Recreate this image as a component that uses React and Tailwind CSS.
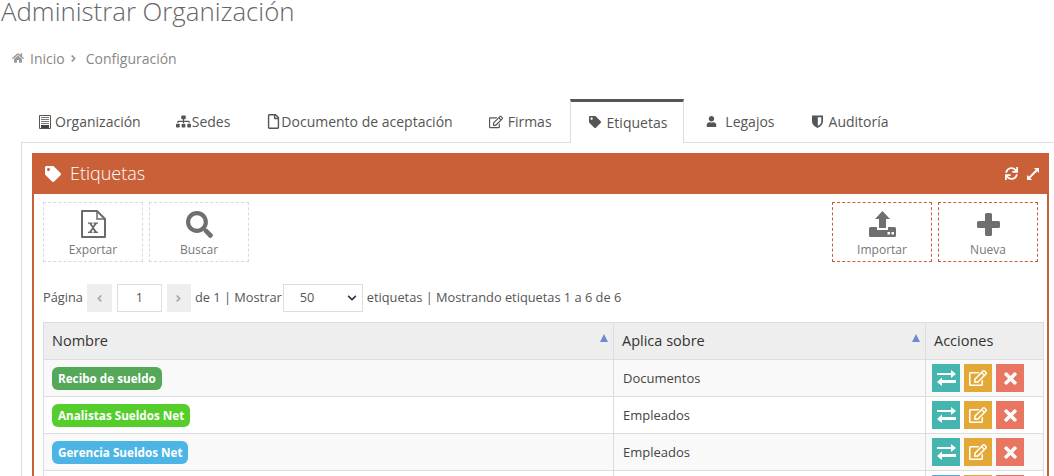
import React from "react";
import { FaHome, FaTag, FaSitemap, FaRegFile, FaRegEdit, FaUser, FaSync, FaSearch, FaAngleLeft, FaAngleRight, FaChevronDown } from "react-icons/fa";

const font = { fontFamily: '"Open Sans", sans-serif' };

function Building() {
  return (
    <svg width="12" height="14" viewBox="0 0 12 14" className="shrink-0">
      <path fill="none" stroke="#555" strokeWidth="1" d="M.5.5h11v13H.5z" />
      <path fill="#777" d="M2 2h8v1H2zM2 4h8v1H2zM2 6h8v1H2zM2 8h8v1H2z" />
      <path fill="#444" d="M2 10h8v3H2z" />
    </svg>
  );
}

function Shield() {
  return (
    <svg width="11" height="13" viewBox="0 0 11 13" className="shrink-0">
      <path fill="#555" d="M0 .5h11v6c0 3-2.500 5-5.500 6.500C2.500 11.500 0 9.500 0 6.500z" />
      <path fill="#fff" d="M5.800 2.200h3.500v4.300c0 1.800-1.500 3.200-3.500 4.400z" />
    </svg>
  );
}

function Upload() {
  return (
    <svg width="27" height="26" viewBox="0 0 27 26">
      <path fill="#6f6f6f" d="M13.500 0l7.500 8h-4v9h-7V8H6z" />
      <path fill="#6f6f6f" d="M1.500 16H8v3h11v-3h6.500a1.500 1.500 0 0 1 1.500 1.500v7a1.500 1.500 0 0 1-1.500 1.500h-24A1.500 1.500 0 0 1 0 24.500v-7A1.500 1.500 0 0 1 1.500 16z" />
      <path fill="#fff" d="M18.500 21h2.500v2.500h-2.500zM22.500 21h2.500v2.500h-2.500z" />
    </svg>
  );
}

function Plus() {
  return (
    <svg width="23" height="23" viewBox="0 0 23 23">
      <path fill="#6f6f6f" d="M9.500 0h4A1.500 1.500 0 0 1 15 1.500V8h6.500A1.500 1.500 0 0 1 23 9.500v4a1.500 1.500 0 0 1-1.500 1.500H15v6.500a1.500 1.500 0 0 1-1.500 1.500h-4A1.500 1.500 0 0 1 8 21.500V15H1.500A1.500 1.500 0 0 1 0 13.500v-4A1.500 1.500 0 0 1 1.500 8H8V1.500A1.500 1.500 0 0 1 9.500 0z" />
    </svg>
  );
}

function FileX() {
  return (
    <svg width="25" height="28" viewBox="0 0 25 28">
      <path fill="none" stroke="#6a6a6a" strokeWidth="2" strokeLinejoin="round" d="M1 1h15l8 8v18H1z" />
      <path fill="none" stroke="#6a6a6a" strokeWidth="1.500" d="M16 1v8h8" />
      <path fill="#6a6a6a" d="M7 12.500h4.500v1.200h-1l1.500 2.400 1.500-2.400h-1v-1.200H17v1.200h-1.200l-2.900 4 3 4.100H17v1.200h-4.500v-1.200h1L12 19.400l-1.600 2.400h1v1.200H7v-1.200h1.200l3-4.100-2.900-4H7z" />
    </svg>
  );
}

function Expand() {
  return (
    <svg width="12" height="12" viewBox="0 0 13 13" className="text-white">
      <path fill="currentColor" d="M7.500 0H13v5.500l-2-2-7.500 7.500 2 2H0V7.500l2 2L9.500 2z" />
    </svg>
  );
}

function Exchange() {
  return (
    <svg width="19" height="16" viewBox="0 0 19 16">
      <path fill="#fff" d="M0 3h14V0l5 4-5 4V5H0zM19 10H5V7.500L0 12l5 4v-3h14z" />
    </svg>
  );
}

function Cross() {
  return (
    <svg width="13" height="13" viewBox="0 0 13 13">
      <path fill="#fff" d="M3 .5l3.500 3.500L10 .5a1 1 0 0 1 1.400 0l1.100 1.100a1 1 0 0 1 0 1.400L9 6.500l3.500 3.500a1 1 0 0 1 0 1.400l-1.100 1.100a1 1 0 0 1-1.400 0L6.500 9 3 12.500a1 1 0 0 1-1.400 0L.5 11.400a1 1 0 0 1 0-1.400L4 6.500.5 3a1 1 0 0 1 0-1.400L1.600.5A1 1 0 0 1 3 .5z" />
    </svg>
  );
}

const tabs = [
  { label: "Organización", icon: <Building />, gap: "gap-[4px]", pr: "pr-[17px]" },
  { label: "Sedes", icon: <FaSitemap size={15} />, gap: "gap-[1px]" },
  { label: "Documento de aceptación", icon: <FaRegFile size={15} />, gap: "gap-0" },
  { label: "Firmas", icon: <FaRegEdit size={14} />, gap: "gap-[5px]" },
  { label: "Etiquetas", icon: <FaTag size={12} />, gap: "gap-[6px]", active: true, pr: "pr-[16px]", pl: "pl-[18px]" },
  { label: "Legajos", icon: <FaUser size={11} />, gap: "gap-[8px]", pl: "pl-[22px]" },
  { label: "Auditoría", icon: <Shield />, gap: "gap-[6px]", pl: "pl-[19px]" },
];

const rows = [
  { name: "Recibo de sueldo", color: "bg-[#55a85a]", applies: "Documentos" },
  { name: "Analistas Sueldos Net", color: "bg-[#55ce2c]", applies: "Empleados" },
  { name: "Gerencia Sueldos Net", color: "bg-[#4db5e5]", applies: "Empleados" },
  { name: "Contadores", color: "bg-[#e3a835]", applies: "Empleados", swap: "bg-[#5ba8e8]" },
  { name: "RRHH", color: "bg-[#e97563]", applies: "Empleados" },
  { name: "Sistemas", color: "bg-[#8e6fc1]", applies: "Empleados" },
];

function ToolButton({ icon, label, accent }) {
  return (
    <div className={`w-[100px] h-[60px] flex flex-col items-center border border-dashed ${accent ? "border-[#c9623a]" : "border-[#d9d9d9]"}`}>
      <div className="h-[28px] mt-[7px] flex items-center justify-center text-[#6f6f6f]">{icon}</div>
      <div className="mt-[4px] text-[12px] leading-[16px] text-[#777]">{label}</div>
    </div>
  );
}

function SortArrow() {
  return <span className="absolute right-[5px] top-[11px] w-0 h-0 border-x-[4px] border-x-transparent border-b-[8px] border-b-[#6f8ad0]" />;
}

export default function App() {
  return (
    <div style={font} className="h-[476px] w-[1054px] overflow-hidden bg-white text-[#555]">
      <h1 className="-mt-[8px] ml-[1px] text-[25.8px] leading-[38px] font-light text-[#666] whitespace-nowrap">
        Administrar Organización
      </h1>
      <div className="mt-[18px] ml-[12px] h-[20px] flex items-center text-[14px] text-[#888]">
        <FaHome size={12} className="text-[#999]" />
        <span className="ml-[6px]">Inicio</span>
        <FaAngleRight size={11} className="ml-[3px] text-[#999]" />
        <span className="ml-[7px]">Configuración</span>
      </div>

      <div className="mt-[31px] ml-[21px] flex h-[44px] border-b border-[#ddd]">
        {tabs.map((t) => (
          <div
            key={t.label}
            className={`h-[44px] flex items-center ${t.pl || "pl-[18px]"} ${t.pr || "pr-[18px]"} ${t.gap} text-[14px] whitespace-nowrap ${
              t.active ? "border-x border-[#ddd] border-t-[3px] border-t-[#555] bg-white pb-[1px]" : "pt-[1px]"
            }`}
          >
            {t.icon}
            <span>{t.label}</span>
          </div>
        ))}
      </div>

      <div className="ml-[21px] border-l border-[#ddd] pt-[10px] pl-[10px] pr-[5px]">
        <div className="border-x-[2px] border-[#c96038] w-[1017px] pb-[20px]">
          <div className="-mx-[2px] h-[41px] bg-[#c96038] flex items-center text-white pl-[13px] pr-[10px]">
            <FaTag size={16} />
            <span className="ml-[9px] text-[18px] font-light">Etiquetas</span>
            <div className="ml-auto flex items-center gap-[9px]">
              <FaSync size={13} />
              <Expand />
            </div>
          </div>

          <div className="pl-[9px] pr-[9px]">
            <div className="mt-[8px] flex gap-[6px]">
              <ToolButton icon={<FileX />} label="Exportar" />
              <ToolButton icon={<FaSearch size={27} />} label="Buscar" />
              <div className="ml-auto flex gap-[6px]">
                <ToolButton accent icon={<Upload />} label="Importar" />
                <ToolButton accent icon={<Plus />} label="Nueva" />
              </div>
            </div>

            <div className="mt-[22px] h-[28px] flex items-center text-[12.8px] whitespace-nowrap">
              <span>Página</span>
              <span className="ml-[4px] w-[25px] h-[28px] bg-[#eee] flex items-center justify-center text-[#aaa]">
                <FaAngleLeft size={11} />
              </span>
              <span className="ml-[5px] w-[45px] h-[28px] border border-[#ddd] flex items-center justify-center text-[#555]">1</span>
              <span className="ml-[5px] w-[24px] h-[28px] bg-[#eee] flex items-center justify-center text-[#aaa]">
                <FaAngleRight size={11} />
              </span>
              <span className="ml-[4px]">de 1 | Mostrar</span>
              <span className="ml-[1px] w-[80px] h-[28px] border border-[#ddd] flex items-center pl-[16px] pr-[5px] text-[#555]">
                50
                <FaChevronDown size={10} className="ml-auto text-[#333]" />
              </span>
              <span className="ml-[4px]">etiquetas | Mostrando etiquetas 1 a 6 de 6</span>
            </div>

            <table className="mt-[10px] w-[1000px] table-fixed border-collapse text-[13px]">
              <colgroup>
                <col className="w-[570px]" />
                <col className="w-[312px]" />
                <col className="w-[118px]" />
              </colgroup>
              <thead>
                <tr className="h-[37px] bg-[#eee] text-left text-[14.5px] text-[#333]">
                  <th className="relative border border-[#ddd] pl-[8px] pb-[1px] font-medium">Nombre<SortArrow /></th>
                  <th className="relative border border-[#ddd] pl-[8px] pb-[1px] font-medium">Aplica sobre<SortArrow /></th>
                  <th className="border border-[#ddd] pl-[8px] pb-[1px] font-medium">Acciones</th>
                </tr>
              </thead>
              <tbody>
                {rows.map((r, i) => (
                  <tr key={r.name} className={`h-[37px] ${i % 2 === 0 ? "bg-[#f9f9f9]" : "bg-white"}`}>
                    <td className="border border-[#ddd] pl-[8px]">
                      <span className={`inline-block align-middle h-[23px] leading-[23px] px-[6px] rounded-[6px] text-white font-bold text-[11.7px] ${r.color}`}>
                        {r.name}
                      </span>
                    </td>
                    <td className="border border-[#ddd] pl-[9px] pt-[1px] text-[#444]">{r.applies}</td>
                    <td className="border border-[#ddd] pl-[6px]">
                      <div className="flex gap-[4px]">
                        <span className={`w-[28px] h-[28px] flex items-center justify-center ${r.swap || "bg-[#45b6af]"}`}>
                          <Exchange />
                        </span>
                        <span className="w-[28px] h-[28px] flex items-center justify-center text-white bg-[#e3a835]">
                          <FaRegEdit size={18} />
                        </span>
                        <span className="w-[28px] h-[28px] flex items-center justify-center bg-[#e97563]">
                          <Cross />
                        </span>
                      </div>
                    </td>
                  </tr>
                ))}
              </tbody>
            </table>
          </div>
        </div>
      </div>
    </div>
  );
}
